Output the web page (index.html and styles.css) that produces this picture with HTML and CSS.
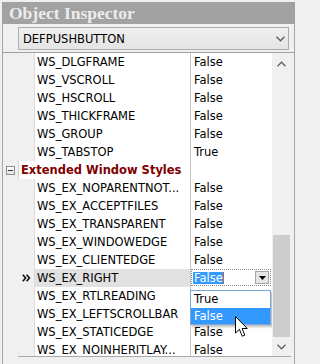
FILE: index.html
```html
<!DOCTYPE html>
<html>
<head>
<meta charset="utf-8">
<link rel="stylesheet" href="styles.css">
</head>
<body>
<div class="frame">
  <div class="title">Object Inspector</div>
  <div class="body">
    <div class="combo">
      <span>DEFPUSHBUTTON</span>
      <svg class="chev" width="9" height="6" viewBox="0 0 9 6"><path d="M0.5 0.8 L4.5 4.8 L8.5 0.8" fill="none" stroke="#5a5a5a" stroke-width="1.3"/></svg>
    </div>
    <div class="grid">
      <div class="rows">
        <div class="row"><div class="gut"></div><div class="name">WS_DLGFRAME</div><div class="val">False</div></div>
        <div class="row"><div class="gut"></div><div class="name">WS_VSCROLL</div><div class="val">False</div></div>
        <div class="row"><div class="gut"></div><div class="name">WS_HSCROLL</div><div class="val">False</div></div>
        <div class="row"><div class="gut"></div><div class="name">WS_THICKFRAME</div><div class="val">False</div></div>
        <div class="row"><div class="gut"></div><div class="name">WS_GROUP</div><div class="val">False</div></div>
        <div class="row"><div class="gut"></div><div class="name">WS_TABSTOP</div><div class="val">True</div></div>
        <div class="row cat"><div class="gut"><span class="minus"></span></div><div class="catname">Extended Window Styles</div><div class="val"></div></div>
        <div class="row"><div class="gut"></div><div class="name">WS_EX_NOPARENTNOT...</div><div class="val">False</div></div>
        <div class="row"><div class="gut"></div><div class="name">WS_EX_ACCEPTFILES</div><div class="val">False</div></div>
        <div class="row"><div class="gut"></div><div class="name">WS_EX_TRANSPARENT</div><div class="val">False</div></div>
        <div class="row"><div class="gut"></div><div class="name">WS_EX_WINDOWEDGE</div><div class="val">False</div></div>
        <div class="row"><div class="gut"></div><div class="name">WS_EX_CLIENTEDGE</div><div class="val">False</div></div>
        <div class="row sel">
          <div class="gut"><svg class="mark" width="9" height="8" viewBox="0 0 9 8"><path d="M0.8 0.8 L3.6 4 L0.8 7.2 M4.6 0.8 L7.4 4 L4.6 7.2" fill="none" stroke="#111" stroke-width="1.6"/></svg></div>
          <div class="name">WS_EX_RIGHT</div>
          <div class="val edit">
            <div class="editor">
              <span class="seltext">False</span>
              <span class="ddbtn"><svg width="7" height="4" viewBox="0 0 7 4"><path d="M0 0 H7 L3.5 4 Z" fill="#000"/></svg></span>
            </div>
          </div>
        </div>
        <div class="row"><div class="gut"></div><div class="name">WS_EX_RTLREADING</div><div class="val"></div></div>
        <div class="row"><div class="gut"></div><div class="name">WS_EX_LEFTSCROLLBAR</div><div class="val"></div></div>
        <div class="row"><div class="gut"></div><div class="name">WS_EX_STATICEDGE</div><div class="val">False</div></div>
        <div class="row"><div class="gut"></div><div class="name">WS_EX_NOINHERITLAY...</div><div class="val">False</div></div>

        <div class="list">
          <div class="item first">True</div>
          <div class="item hl">False</div>
        </div>
        <svg class="cursor" width="14" height="22" viewBox="0 0 14 22"><path d="M0.5 0.5 V17 L4.4 13.3 L7.2 20.2 L9.8 19.2 L7.1 12.5 H12.3 Z" fill="#fff" stroke="#000" stroke-width="1" stroke-linejoin="miter"/></svg>
      </div>
      <div class="sb">
        <div class="sbbtn"><svg width="9" height="6" viewBox="0 0 9 6"><path d="M0.5 5.2 L4.5 1.2 L8.5 5.2" fill="none" stroke="#606060" stroke-width="1.3"/></svg></div>
        <div class="thumb"></div>
        <div class="sbbtn down"><svg width="9" height="6" viewBox="0 0 9 6"><path d="M0.5 0.8 L4.5 4.8 L8.5 0.8" fill="none" stroke="#606060" stroke-width="1.3"/></svg></div>
      </div>
    </div>
    <div class="foot"></div>
  </div>
</div>
</body>
</html>
```

FILE: styles.css
```css
html, body {
  margin: 0;
  padding: 0;
}
body {
  width: 297px;
  height: 364px;
  overflow: hidden;
  background: #f0f0f0;
  font-family: "DejaVu Sans", Verdana, sans-serif;
  font-size: 11.5px;
  color: #000;
}
.frame {
  margin: 2px 0 0 2px;
  width: 293px;
}
.title {
  height: 22px;
  background: #a2a2a2;
  color: #ececec;
  font-family: "Liberation Serif", "Times New Roman", serif;
  font-weight: bold;
  font-size: 17.5px;
  line-height: 23px;
  padding-left: 7px;
  white-space: nowrap;
}
.body {
  height: 340px;
  border-left: 1px solid #a6a6a6;
  border-right: 1px solid #a6a6a6;
  display: flex;
  flex-direction: column;
}
.combo {
  margin: 3px 5px 0 15px;
  height: 23px;
  box-sizing: border-box;
  border: 1px solid #adadad;
  background: linear-gradient(#efefef, #e4e4e4);
  display: flex;
  align-items: center;
  justify-content: space-between;
  padding: 0 3px 0 4px;
}
.chev {
  display: block;
}
.grid {
  margin-top: 2px;
  border-top: 1px solid #a0a0a0;
  display: flex;
  height: 303px;
  flex: none;
}
.rows {
  width: 269px;
  height: 303px;
  overflow: hidden;
  position: relative;
  flex: none;
}
.row {
  display: grid;
  grid-template-columns: 31px 156px 1fr;
  height: 18px;
  line-height: 18px;
  white-space: nowrap;
}
.row.cat {
  grid-template-columns: 15px 172px 1fr;
}
.gut {
  background: #f0f0f0;
  display: flex;
  align-items: center;
}
.name {
  background: #fff;
  border-left: 1px solid #dcdcdc;
  padding-left: 2px;
  overflow: hidden;
}
.val {
  background: #fff;
  border-left: 1px solid #c8c8c8;
  padding-left: 3px;
  overflow: hidden;
}
.catname {
  background: #fff;
  border-left: 1px solid #d0d0d0;
  padding-left: 2px;
  color: #800000;
  font-weight: bold;
  overflow: hidden;
}
.minus {
  width: 9px;
  height: 9px;
  box-sizing: border-box;
  margin-left: 3px;
  border: 1px solid #8e8e8e;
  background: linear-gradient(#ffffff, #e2e2e2);
  display: flex;
  align-items: center;
  justify-content: center;
}
.minus::before {
  content: "";
  width: 5px;
  height: 1px;
  background: #333;
}
.sel .gut {
  justify-content: flex-end;
  padding-right: 3px;
}
.mark {
  display: block;
}
.sel .name {
  background: #e1e1e1;
}
.val.edit {
  position: relative;
  padding-left: 0;
}
.editor {
  position: absolute;
  left: 0;
  top: 0;
  width: 80px;
  height: 17px;
  box-sizing: border-box;
  border: 1px dotted #8a8a8a;
}
.seltext {
  position: absolute;
  left: 1px;
  top: 2px;
  height: 12px;
  line-height: 12px;
  padding: 0 0 0 1px;
  background: #3399ff;
  color: #fff;
  border-right: 1px solid #b8692c;
}
.ddbtn {
  position: absolute;
  right: 1px;
  top: 1px;
  width: 14px;
  height: 13px;
  box-sizing: border-box;
  border: 1px solid #a5a5a5;
  background: #e5e5e5;
  display: flex;
  align-items: center;
  justify-content: center;
}
.ddbtn svg {
  display: block;
}
.list {
  position: absolute;
  left: 187px;
  top: 237px;
  width: 81px;
  height: 35px;
  box-sizing: border-box;
  border: 1px solid #7ea6d9;
  background: #fff;
  box-shadow: 2px 2px 2px rgba(0, 0, 0, 0.25);
}
.item {
  height: 16px;
  line-height: 16px;
  padding-left: 3px;
}
.item.first {
  height: 17px;
  line-height: 17px;
}
.item.hl {
  background: #3399ff;
  color: #fff;
}
.cursor {
  position: absolute;
  left: 232px;
  top: 263px;
}
.sb {
  width: 19px;
  height: 303px;
  background: #f0f0f0;
  display: flex;
  flex-direction: column;
  flex: none;
}
.sbbtn {
  height: 21px;
  display: flex;
  align-items: center;
  justify-content: center;
}
.sbbtn svg {
  display: block;
}
.sbbtn.down {
  height: 19px;
}
.thumb {
  margin: 161px 1px 0 1px;
  height: 102px;
  background: #cdcdcd;
}
.foot {
  margin: 0 3px 0 15px;
  border-top: 1px solid #a8a8a8;
}
```
